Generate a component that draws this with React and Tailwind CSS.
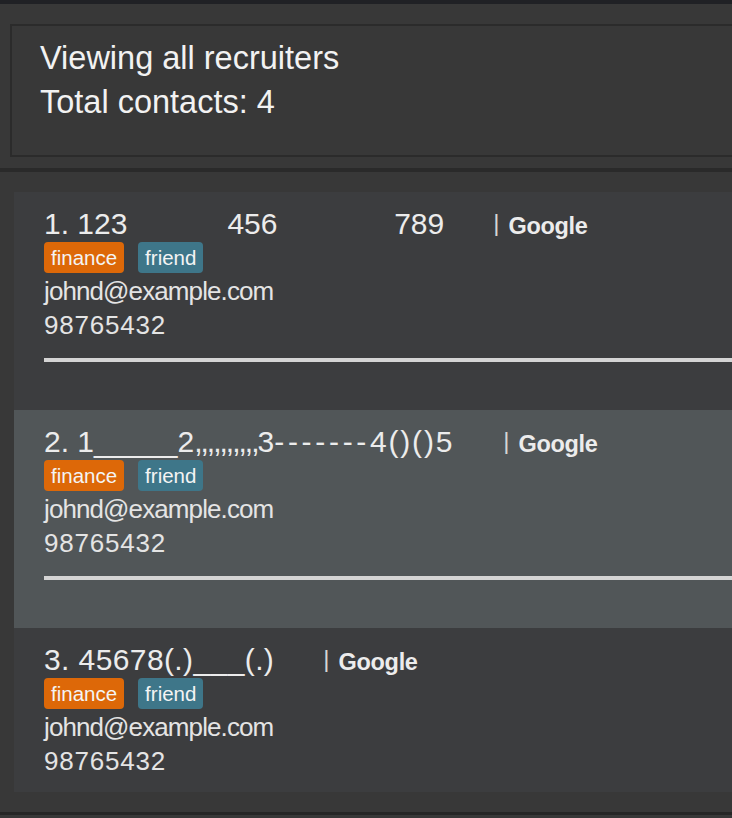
import React from "react";

// name segments: [text, extra className]
const recruiters = [
  {
    id: 1,
    name: [["1. 123            456              789", ""]],
    company: "Google",
    selected: false,
    divider: true,
  },
  {
    id: 2,
    name: [
      ["2. 1_____2", ""],
      [",,,,,,,,,,", "tracking-[-2px]"],
      ["3", ""],
      ["-------", "tracking-[3.7px]"],
      ["4()()5", "tracking-[1.8px]"],
    ],
    company: "Google",
    selected: true,
    divider: true,
  },
  {
    id: 3,
    name: [["3. 45678(.)___(.)", "tracking-[0.4px]"]],
    company: "Google",
    selected: false,
    divider: false,
  },
];

const tags = [
  { label: "finance", color: "bg-[#dd6808]" },
  { label: "friend", color: "bg-[#3e7689]" },
];

const RecruiterCard = ({ item }) => (
  <div
    className={`pl-[30px] pt-[14px] pb-[14px] ${
      item.selected ? "bg-[#515658]" : "bg-[#3c3d3f]"
    }`}
  >
    {/* Name + company */}
    <div className="h-[35px] whitespace-pre text-[30px] leading-[35px] text-[#ececec]">
      {item.name.map(([text, cls], i) => (
        <span key={i} className={cls}>
          {text}
        </span>
      ))}
      <span className="ml-[49px] align-[3px] text-[24px] leading-none text-[#d6d6d6]">|</span>
      <span className="ml-[9px] text-[23.5px] font-bold leading-none tracking-[-0.3px] text-[#ececec]">
        {item.company}
      </span>
    </div>

    {/* Tags */}
    <div className="mt-px flex gap-[14px]">
      {tags.map((tag) => (
        <span
          key={tag.label}
          className={`${tag.color} h-[31px] rounded-[4px] px-[7px] text-[20.5px] leading-[31px] text-[#f4f4f4]`}
        >
          {tag.label}
        </span>
      ))}
    </div>

    <p className="mt-[1px] text-[26px] leading-[34px] tracking-[-0.9px] text-[#e4e4e4]">
      johnd@example.com
    </p>
    <p className="text-[26px] leading-[34px] tracking-[0.8px] text-[#e4e4e4]">98765432</p>

    {item.divider && <div className="mt-[16px] mb-[34px] h-[4px] bg-[#d4d4d4]" />}
  </div>
);

const App = () => {
  return (
    <div
      className="h-[818px] w-[732px] overflow-hidden bg-[#383838]"
      style={{ fontFamily: '"Liberation Sans", Arial, sans-serif' }}
    >
      <div className="h-[4px] bg-[#202125]" />

      {/* Header */}
      <div className="h-[164px] pl-[10px] pt-[20px]">
        <div className="h-[133px] border-2 border-r-0 border-[#2b2b2b] pl-[28px] pt-[10px] text-[32.5px] leading-[44px] text-[#f2f2f2]">
          <p>Viewing all recruiters</p>
          <p>Total contacts: 4</p>
        </div>
      </div>

      <div className="h-[4px] bg-[#2a2a2a]" />

      {/* List */}
      <div className="h-[640px] pl-[14px] pt-[20px]">
        {recruiters.map((item) => (
          <RecruiterCard key={item.id} item={item} />
        ))}
      </div>

      <div className="h-[3px] bg-[#262626]" />
    </div>
  );
};

export default App;
